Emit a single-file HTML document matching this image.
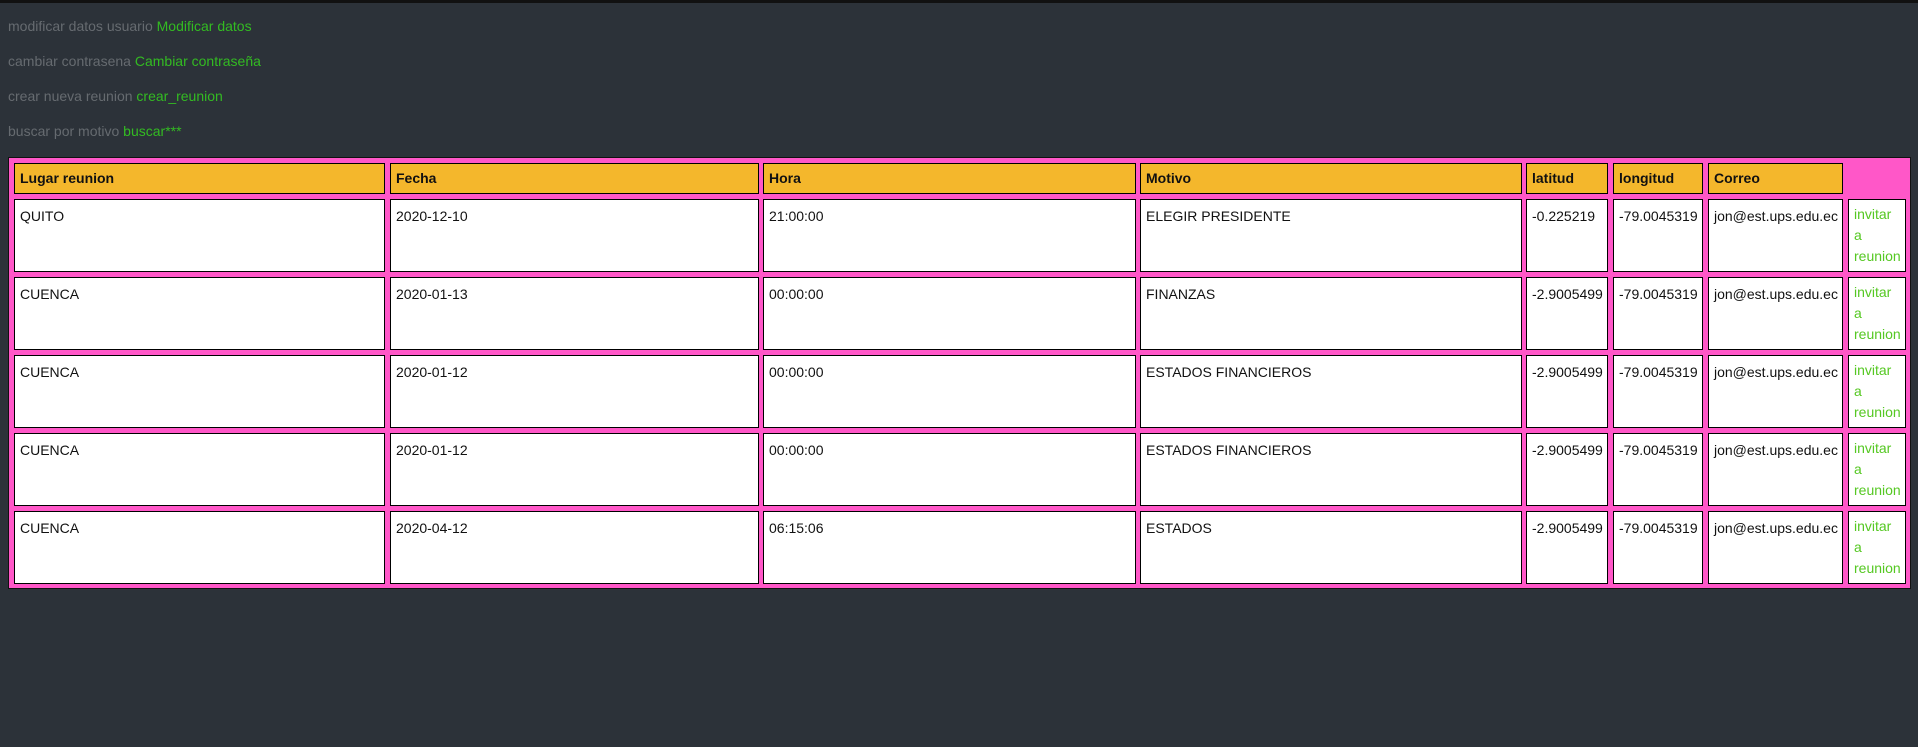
<!DOCTYPE html>
<html><head><meta charset="utf-8"><style>
html,body{margin:0;padding:0;}
body{width:1918px;height:747px;background:#2c3239;font-family:"Liberation Sans",Arial,sans-serif;font-size:14px;position:relative;overflow:hidden;}
.bar{position:absolute;left:0;top:0;width:1918px;height:3px;background:#111;}
.t{position:absolute;left:8px;color:#666b70;white-space:nowrap;}
.t a{color:#33bb22;text-decoration:none;}
.tbl{position:absolute;left:8px;top:157px;width:1903px;height:432px;background:#ff57c8;border:1px solid #111;box-sizing:border-box;}
.c{position:absolute;box-sizing:border-box;border:1px solid #000;background:#fff;color:#111;padding:6px 5px;line-height:21px;white-space:nowrap;overflow:hidden;}
.h{background:#f4b72c;font-weight:bold;padding:0 5px;line-height:29px;}
.g{color:#55c822;white-space:normal;line-height:21px;padding:4px 5px;}
</style></head><body>
<div class="bar"></div>
<div class="t" style="top:18px">modificar datos usuario <a>Modificar datos</a></div>
<div class="t" style="top:53px">cambiar contrasena <a>Cambiar contraseña</a></div>
<div class="t" style="top:88px">crear nueva reunion <a>crear_reunion</a></div>
<div class="t" style="top:123px">buscar por motivo <a>buscar***</a></div>
<div class="tbl"></div>
<div id="g"></div>
<script>
var cols=[[14,371],[390,369],[763,373],[1140,382],[1526,82],[1613,90],[1708,135],[1848,58]];
var heads=["Lugar reunion","Fecha","Hora","Motivo","latitud","longitud","Correo"];
var rows=[["QUITO","2020-12-10","21:00:00","ELEGIR PRESIDENTE","-0.225219","-79.0045319","jon@est.ups.edu.ec"],
["CUENCA","2020-01-13","00:00:00","FINANZAS","-2.9005499","-79.0045319","jon@est.ups.edu.ec"],
["CUENCA","2020-01-12","00:00:00","ESTADOS FINANCIEROS","-2.9005499","-79.0045319","jon@est.ups.edu.ec"],
["CUENCA","2020-01-12","00:00:00","ESTADOS FINANCIEROS","-2.9005499","-79.0045319","jon@est.ups.edu.ec"],
["CUENCA","2020-04-12","06:15:06","ESTADOS","-2.9005499","-79.0045319","jon@est.ups.edu.ec"]];
var h="";
for(var i=0;i<7;i++)h+='<div class="c h" style="left:'+cols[i][0]+'px;top:163px;width:'+cols[i][1]+'px;height:31px">'+heads[i]+'</div>';
for(var r=0;r<5;r++){var y=199+78*r;
for(var i=0;i<7;i++)h+='<div class="c" style="left:'+cols[i][0]+'px;top:'+y+'px;width:'+cols[i][1]+'px;height:73px">'+rows[r][i]+'</div>';
h+='<div class="c g" style="left:1848px;top:'+y+'px;width:58px;height:73px">invitar<br>a<br>reunion</div>';}
document.getElementById("g").innerHTML=h;
</script>
</body></html>
